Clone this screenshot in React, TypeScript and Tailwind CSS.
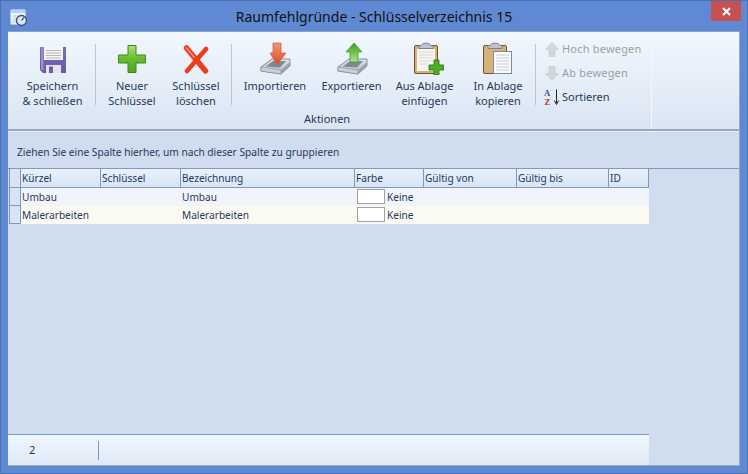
import React from 'react';

const FONT = "font-['Noto_Sans','Open_Sans',sans-serif]";

function AppIcon() {
  return (
    <svg width="18" height="18" viewBox="0 0 18 18">
      <rect x="0.500" y="0.500" width="15" height="15" rx="1.500" fill="#eef3fa" stroke="#a9c0e2" />
      <rect x="1" y="1" width="14" height="3" fill="#b9cfee" />
      <path d="M2 7h12M2 10h7M2 13h6M5 5v9M10 5v3" stroke="#c6d3e6" strokeWidth="1" />
      <circle cx="11.500" cy="11.500" r="5" fill="#dbe8f8" stroke="#3c4f6e" strokeWidth="1.300" />
      <path d="M11.500 11.500 L14 8.500" stroke="#2b5fa8" strokeWidth="1.200" />
    </svg>
  );
}

function Floppy() {
  return (
    <svg width="26" height="34" viewBox="0 0 26 34">
      <defs>
        <linearGradient id="fl" x1="0" y1="0" x2="0" y2="1">
          <stop offset="0" stopColor="#7a6cb8" />
          <stop offset="1" stopColor="#675aa8" />
        </linearGradient>
      </defs>
      <path d="M0 6 H26 V32 H3 L0 29 Z" fill="url(#fl)" />
      <rect x="1" y="6" width="2.500" height="23" fill="#9a8ed0" />
      <rect x="4" y="6" width="19" height="13" fill="#f5f5f3" />
      <path d="M6 9.500h15M6 12h15M6 14.500h15M6 17h15" stroke="#b8b8b8" strokeWidth="1" />
      <rect x="6" y="24" width="15" height="8" fill="#e4e4ea" />
      <rect x="9" y="25.500" width="4" height="6.500" fill="#6a5ea6" />
    </svg>
  );
}

function Plus() {
  return (
    <svg width="28" height="34" viewBox="0 0 28 34">
      <defs>
        <linearGradient id="pl" x1="0" y1="0" x2="0" y2="1">
          <stop offset="0" stopColor="#a8e070" />
          <stop offset="0.5" stopColor="#66bd30" />
          <stop offset="1" stopColor="#4ea322" />
        </linearGradient>
      </defs>
      <path d="M10 4.500h8v9.500h9.500v8h-9.500v9.500h-8v-9.500h-9.500v-8h9.500z" fill="url(#pl)" stroke="#3c8a14" />
    </svg>
  );
}

function Cross() {
  return (
    <svg width="26" height="34" viewBox="0 0 26 34">
      <path d="M3.500 7 L22.500 30" stroke="#e8401f" strokeWidth="5.500" strokeLinecap="round" />
      <path d="M23 8 L4 30" stroke="#ee3a1a" strokeWidth="4.500" strokeLinecap="round" />
      <path d="M3.500 7 L11 16" stroke="#f58a70" strokeWidth="1.800" strokeLinecap="round" />
    </svg>
  );
}

function Tray({ arrow }: { arrow: 'in' | 'out' }) {
  const id = arrow === 'in' ? 'arIn' : 'arOut';
  return (
    <svg width="32" height="34" viewBox="0 0 32 34">
      <defs>
        <linearGradient id={id} x1="0" y1="0" x2="0" y2="1">
          {arrow === 'in' ? <stop offset="0" stopColor="#e89a82" /> : <stop offset="0" stopColor="#3f9e20" />}
          {arrow === 'in' ? <stop offset="1" stopColor="#e6491e" /> : <stop offset="1" stopColor="#a8e884" />}
        </linearGradient>
        <linearGradient id={`${id}T`} x1="0" y1="0" x2="0" y2="1">
          <stop offset="0" stopColor="#dfe4ea" />
          <stop offset="1" stopColor="#aeb7c2" />
        </linearGradient>
      </defs>
      <path d="M2 26 L13 18 H31 V25 L22 33 L2 30 Z" fill={`url(#${id}T)`} stroke="#6f7986" strokeWidth="0.800" />
      <path d="M7 25.500 L14 20 H27 L21 26.500 Z" fill="#7d8896" />
      <path d="M2 26 L22 29 V33 L2 30 Z" fill="#c8d0d9" stroke="#79838f" strokeWidth="0.500" />
      <path d="M22 29 L31 21 V25 L22 33 Z" fill="#99a3af" />
      {arrow === 'in' ? (
        <path d="M14 2 H22 V12 H27 L18 23.500 L11 12 H14 Z" fill={`url(#${id})`} stroke="#d4532a" strokeWidth="0.700" />
      ) : (
        <path d="M18 2 L26 11 H22 V21 H14 V11 H10 Z" fill={`url(#${id})`} stroke="#3d9a1c" strokeWidth="0.700" />
      )}
    </svg>
  );
}

function ClipboardBase({ x }: { x: number }) {
  return (
    <g transform={`translate(${x} 0)`}>
      <rect x="0.500" y="4.500" width="23" height="28" rx="1.500" fill="#d6b27a" stroke="#6b5226" />
      <path d="M7 4.500 Q8 2 12 2 Q16 2 17 4.500 H19 V7.500 H5 V4.500 Z" fill="#bcc3cc" stroke="#6f7884" strokeWidth="0.800" />
    </g>
  );
}

function ClipboardPlus() {
  return (
    <svg width="38" height="34" viewBox="0 0 38 34">
      <ClipboardBase x={8} />
      <rect x="11" y="8" width="18" height="22" fill="#f5f5f1" />
      <path d="M13 11h14M13 14h14M13 17h14M13 20h14M13 23h9" stroke="#dcdcd6" />
      <path d="M28 19h5v5h5v5h-5v5h-5v-5h-5v-5h5z" fill="#4eae24" stroke="#256f0c" strokeWidth="0.800" />
    </svg>
  );
}

function ClipboardCopy() {
  return (
    <svg width="30" height="34" viewBox="0 0 30 34">
      <ClipboardBase x={0} />
      <rect x="10.500" y="10.500" width="18" height="22" fill="#fafbfd" stroke="#808a98" />
      <path d="M13 14h13M13 17h13M13 20h13M13 23h13M13 26h13M13 29h13" stroke="#c3cad6" />
    </svg>
  );
}

function GrayArrow({ down }: { down?: boolean }) {
  return (
    <svg width="14" height="15" viewBox="0 0 14 15" className={down ? 'rotate-180' : ''}>
      <path d="M7 0.500 L13.500 7.500 H10 V14.500 H4 V7.500 H0.500 Z" fill="#d3d7dc" stroke="#c8ccd2" strokeWidth="0.700" />
    </svg>
  );
}

function SortAZ() {
  return (
    <svg width="16" height="16" viewBox="0 0 16 16" className="overflow-visible">
      <text x="0" y="6.600" fontSize="8.500" fontWeight="700" fontFamily="'Liberation Serif', serif" fill="#2f52a8">A</text>
      <text x="0.500" y="16.100" fontSize="8.500" fontWeight="700" fontFamily="'Liberation Serif', serif" fill="#9c3a30">Z</text>
      <path d="M12.500 0.500 V14 M10.300 11.500 L12.500 15.500 L14.700 11.500" stroke="#222" strokeWidth="1" fill="none" />
    </svg>
  );
}

function RibbonButton({ icon, lines, width }: { icon: React.ReactNode; lines: string[]; width: string }) {
  return (
    <div className={`flex flex-col items-center shrink-0 ${width}`}>
      <div className="h-[41px] flex items-end justify-center">{icon}</div>
      <div className="mt-[3px] text-center text-[11px] leading-[15px] text-[#1e395b] whitespace-nowrap">
        {lines.map((l) => (
          <div key={l}>{l}</div>
        ))}
      </div>
    </div>
  );
}

const COLUMNS = [
  { label: 'Kürzel', width: 'w-[80px]' },
  { label: 'Schlüssel', width: 'w-[80px]' },
  { label: 'Bezeichnung', width: 'w-[174px]' },
  { label: 'Farbe', width: 'w-[69px]' },
  { label: 'Gültig von', width: 'w-[93px]' },
  { label: 'Gültig bis', width: 'w-[92px]' },
  { label: 'ID', width: 'w-[40px]' },
];

const ROWS = [
  { name: 'Umbau', bg: 'bg-[#f1f5fb]' },
  { name: 'Malerarbeiten', bg: 'bg-[#fbfaf2]' },
];

function Row({ name, bg }: { name: string; bg: string }) {
  return (
    <div className="flex h-[18px] ml-[1px]">
      <div className="w-[12px] shrink-0 bg-[#d9e4f3] border-l border-r border-b border-[#7d9ac4]" />
      <div className={`flex flex-1 items-center text-[10.100px] text-[#1e395b] ${bg}`}>
        <div className="w-[80px] pl-[1px] pt-[2px]">{name}</div>
        <div className="w-[80px]" />
        <div className="w-[174px] pl-[1px] pt-[2px]">{name}</div>
        <div className="w-[69px] flex items-center pl-[2px] gap-[2px]">
          <div className="w-[28px] h-[15px] bg-white border border-[#a0a0a0]" />
          <span className="pt-[2px]">Keine</span>
        </div>
      </div>
    </div>
  );
}

export default function App() {
  return (
    <div className={`w-[748px] h-[474px] flex flex-col bg-[#5f89d3] border border-[#4a70b0] ${FONT}`}>
      {/* title bar */}
      <div className="h-[30px] shrink-0 flex items-start relative">
        <div className="ml-[9px] mt-[8px]">
          <AppIcon />
        </div>
        <div className="absolute left-0 right-0 top-[6px] text-center text-[14px] leading-[20px] text-[#111]">
          Raumfehlgründe - Schlüsselverzeichnis 15
        </div>
        <div className="absolute right-[6px] top-0 w-[30px] h-[20px] bg-[#c75050] flex items-center justify-center">
          <svg width="9" height="9" viewBox="0 0 9 9">
            <path d="M1 1 L8 8 M8 1 L1 8" stroke="#fff" strokeWidth="2" />
          </svg>
        </div>
      </div>

      {/* content */}
      <div className="mx-[7px] mb-[7px] flex-1 flex flex-col bg-[#d0ddee] border-t border-[#8ba3c8] border-r border-r-[#9aa9bd] border-b border-b-[#9aa9bd] min-h-0">
        {/* ribbon */}
        <div className="h-[99px] shrink-0 flex bg-gradient-to-b from-[#f2f7fe] to-[#dae5f2] border-b-2 border-[#93a8c6]">
          <div className="w-[644px] shrink-0 flex flex-col border-r border-[#f4f8fd] relative">
            <div className="flex items-start pl-[2px] pt-[2px]">
              <RibbonButton icon={<Floppy />} lines={['Speichern', '& schließen']} width="w-[85px]" />
              <div className="w-[1px] h-[61px] mt-[10px] bg-[#b9c6d8]" />
              <RibbonButton icon={<Plus />} lines={['Neuer', 'Schlüssel']} width="w-[72px]" />
              <RibbonButton icon={<Cross />} lines={['Schlüssel', 'löschen']} width="w-[56px]" />
              <div className="w-[1px] h-[61px] mt-[10px] ml-[7px] bg-[#b9c6d8]" />
              <RibbonButton icon={<Tray arrow="in" />} lines={['Importieren']} width="w-[86px]" />
              <RibbonButton icon={<Tray arrow="out" />} lines={['Exportieren']} width="w-[67px]" />
              <RibbonButton icon={<ClipboardPlus />} lines={['Aus Ablage', 'einfügen']} width="w-[79px]" />
              <div className="ml-[3px]">
                <RibbonButton icon={<ClipboardCopy />} lines={['In Ablage', 'kopieren']} width="w-[62px]" />
              </div>
              <div className="w-[1px] h-[61px] mt-[10px] ml-[6px] bg-[#b9c6d8]" />
              <div className="ml-[9px] mt-[7px] flex flex-col gap-[8px] text-[11px] leading-[16px]">
                <div className="flex items-center gap-[3px] text-[#9d9fa3] tracking-[0.2px]"><GrayArrow /><span>Hoch bewegen</span></div>
                <div className="flex items-center gap-[3px] text-[#9d9fa3] tracking-[0.2px]"><GrayArrow down /><span>Ab bewegen</span></div>
                <div className="flex items-center gap-[2px] -ml-[1px] text-[#1e395b]"><SortAZ /><span>Sortieren</span></div>
              </div>
            </div>
            <div className="absolute left-[296px] bottom-[3px] text-[11px] leading-[15px] text-[#1e395b]">Aktionen</div>
          </div>
        </div>

        {/* group panel */}
        <div className="h-[38px] shrink-0 border-t border-[#e6eef8] flex items-center pl-[9px] pt-[6px] text-[10.200px] text-[#1e395b] border-b border-b-[#7d9ac4]">
          Ziehen Sie eine Spalte hierher, um nach dieser Spalte zu gruppieren
        </div>

        {/* grid */}
        <div className="flex-1 flex flex-col w-[641px] min-h-0">
          <div className="flex-1">
            <div className="flex h-[19px] ml-[1px] border-b border-[#7d9ac4]">
              <div className="w-[12px] shrink-0 bg-[#d9e4f3] border-l border-r border-[#7d9ac4]" />
              {COLUMNS.map((c) => (
                <div key={c.label} className={`${c.width} shrink-0 pl-[1px] pt-[2px] flex items-center text-[10.100px] text-[#1e395b] bg-gradient-to-b from-[#e9f1fb] to-[#d9e5f4] border-r border-[#7d9ac4]`}>
                  {c.label}
                </div>
              ))}
            </div>
            {ROWS.map((r) => (
              <Row key={r.name} name={r.name} bg={r.bg} />
            ))}
          </div>

          {/* footer */}
          <div className="h-[31px] shrink-0 flex items-center border-t border-[#7d9ac4] bg-gradient-to-b from-[#f0f6fe] to-[#dfe9f5] text-[11px] text-[#1e395b]">
            <div className="w-[91px] pl-[21px] h-[19px] flex items-center border-r border-[#7d9ac4]">2</div>
          </div>
        </div>
      </div>
    </div>
  );
}
